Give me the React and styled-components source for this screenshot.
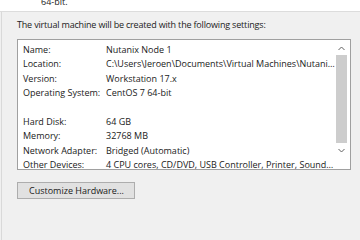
import React from "react";
import styled, { createGlobalStyle } from "styled-components";

const GlobalStyle = createGlobalStyle`
  html, body {
    margin: 0;
    padding: 0;
    background: #f0f0f0;
  }
  body {
    width: 360px;
    height: 240px;
    overflow: hidden;
    font-family: "Open Sans", "Noto Sans", sans-serif;
    font-size: 9px;
    color: #000;
  }
`;

const settings = [
  { label: "Name:", value: "Nutanix Node 1" },
  { label: "Location:", value: "C:\\Users\\Jeroen\\Documents\\Virtual Machines\\Nutani…" },
  { label: "Version:", value: "Workstation 17.x" },
  { label: "Operating System:", value: "CentOS 7 64-bit" },
  { gap: true },
  { label: "Hard Disk:", value: "64 GB" },
  { label: "Memory:", value: "32768 MB" },
  { label: "Network Adapter:", value: "Bridged (Automatic)" },
  { label: "Other Devices:", value: "4 CPU cores, CD/DVD, USB Controller, Printer, Sound…" },
];

export default function App() {
  return (
    <>
      <GlobalStyle />
      <Window>
        <TopPane>
          <span>64-bit.</span>
        </TopPane>
        <Body>
          <Heading>The virtual machine will be created with the following settings:</Heading>
          <ListBox>
            <Rows>
              {settings.map((s, i) =>
                s.gap ? (
                  <Row key={i} />
                ) : (
                  <Row key={i}>
                    <div>{s.label}</div>
                    <div>{s.value}</div>
                  </Row>
                )
              )}
            </Rows>
            <ScrollBar>
              <Arrow>
                <svg width="7" height="5" viewBox="0 0 7 5">
                  <path d="M0.5 4 L3.5 1 L6.5 4" fill="none" stroke="#606060" strokeWidth="1" />
                </svg>
              </Arrow>
              <Thumb />
              <Arrow>
                <svg width="7" height="5" viewBox="0 0 7 5">
                  <path d="M0.5 1 L3.5 4 L6.5 1" fill="none" stroke="#606060" strokeWidth="1" />
                </svg>
              </Arrow>
            </ScrollBar>
          </ListBox>
          <Button>Customize Hardware...</Button>
        </Body>
      </Window>
    </>
  );
}

const Window = styled.div`
  display: flex;
  flex-direction: column;
  height: 240px;
`;

const TopPane = styled.div`
  height: 11px;
  background: #fff;
  border-bottom: 1px solid #dcdcdc;
  overflow: hidden;
  padding-left: 41px;

  span {
    display: block;
    line-height: 12px;
    margin-top: -4px;
    color: #222;
  }
`;

const Body = styled.div`
  flex: 1;
  border-left: 1px solid #d9d9d9;
  margin-left: 1px;
  padding: 7px 0 0 15px;
`;

const Heading = styled.div`
  line-height: 12px;
  letter-spacing: -0.18px;
  color: #222;
`;

const ListBox = styled.div`
  margin-top: 8px;
  width: 332px;
  height: 129px;
  background: #fff;
  border: 1px solid #a0a0a0;
  display: flex;
`;

const Rows = styled.div`
  flex: 1;
  padding: 3px 0 0 5px;
`;

const Row = styled.div`
  display: grid;
  grid-template-columns: 83px 1fr;
  height: 14.4px;
  line-height: 14.4px;
  white-space: nowrap;
  color: #1a1a1a;
`;

const ScrollBar = styled.div`
  width: 15px;
  margin: 1px 1px 1px 0;
  display: flex;
  flex-direction: column;
  align-items: center;
`;

const Arrow = styled.div`
  height: 14px;
  width: 100%;
  display: flex;
  align-items: center;
  justify-content: center;
`;

const Thumb = styled.div`
  width: 11px;
  height: 88px;
  background: #cdcdcd;
`;

const Button = styled.div`
  margin-top: 12px;
  width: 118px;
  height: 17px;
  box-sizing: border-box;
  border: 1px solid #adadad;
  background: #e1e1e1;
  line-height: 15px;
  padding-left: 11px;
  color: #1a1a1a;
`;
